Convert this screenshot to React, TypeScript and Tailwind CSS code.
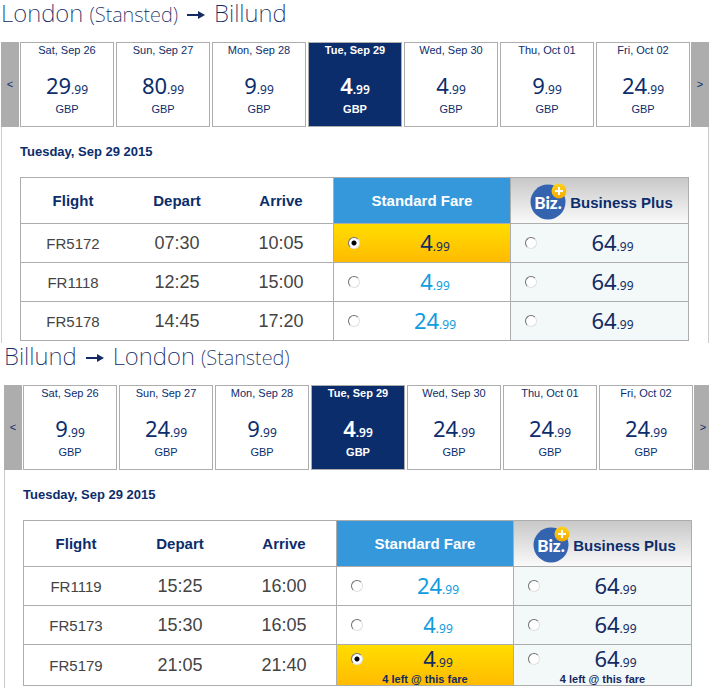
import { ReactNode } from "react";
import clsx from "clsx";

type Day = { label: string; price: string; selected?: boolean };

type Flight = {
  number: string;
  depart: string;
  arrive: string;
  standard: string;
  business: string;
  selected?: boolean;
  note?: string;
};

type Leg = {
  id: string;
  title: ReactNode;
  days: Day[];
  flights: Flight[];
};

function Arrow() {
  return (
    <svg
      width="20"
      height="12"
      viewBox="0 0 20 12"
      className="inline-block mx-2 align-baseline"
      aria-label="to"
    >
      <path d="M1 4h11V1l7 4-7 4V6H1z" fill="#142a62" />
    </svg>
  );
}

const LEGS: Leg[] = [
  {
    id: "outbound",
    title: (
      <>
        London <span className="text-[20px]">(Stansted)</span>
        <Arrow />
        Billund
      </>
    ),
    days: [
      { label: "Sat, Sep 26", price: "29.99" },
      { label: "Sun, Sep 27", price: "80.99" },
      { label: "Mon, Sep 28", price: "9.99" },
      { label: "Tue, Sep 29", price: "4.99", selected: true },
      { label: "Wed, Sep 30", price: "4.99" },
      { label: "Thu, Oct 01", price: "9.99" },
      { label: "Fri, Oct 02", price: "24.99" },
    ],
    flights: [
      { number: "FR5172", depart: "07:30", arrive: "10:05", standard: "4.99", business: "64.99", selected: true },
      { number: "FR1118", depart: "12:25", arrive: "15:00", standard: "4.99", business: "64.99" },
      { number: "FR5178", depart: "14:45", arrive: "17:20", standard: "24.99", business: "64.99" },
    ],
  },
  {
    id: "inbound",
    title: (
      <>
        Billund
        <Arrow />
        London <span className="text-[20px]">(Stansted)</span>
      </>
    ),
    days: [
      { label: "Sat, Sep 26", price: "9.99" },
      { label: "Sun, Sep 27", price: "24.99" },
      { label: "Mon, Sep 28", price: "9.99" },
      { label: "Tue, Sep 29", price: "4.99", selected: true },
      { label: "Wed, Sep 30", price: "24.99" },
      { label: "Thu, Oct 01", price: "24.99" },
      { label: "Fri, Oct 02", price: "24.99" },
    ],
    flights: [
      { number: "FR1119", depart: "15:25", arrive: "16:00", standard: "24.99", business: "64.99" },
      { number: "FR5173", depart: "15:30", arrive: "16:05", standard: "4.99", business: "64.99" },
      {
        number: "FR5179",
        depart: "21:05",
        arrive: "21:40",
        standard: "4.99",
        business: "64.99",
        selected: true,
        note: "4 left @ this fare",
      },
    ],
  },
];

function Price({ value, className }: { value: string; className: string }) {
  const [whole, cents] = value.split(".");
  return (
    <span className={clsx("block font-['Noto_Sans',sans-serif] text-[22px]", className)}>
      {whole}
      <span className="text-[12px] leading-none">.{cents}</span>
    </span>
  );
}

function BizLogo() {
  return (
    <svg width="38" height="38" viewBox="0 0 38 38" aria-hidden="true">
      <defs>
        <linearGradient id="plus" x1="0" y1="0" x2="0" y2="1">
          <stop offset="0" stopColor="#ffd21a" />
          <stop offset="1" stopColor="#f3a900" />
        </linearGradient>
      </defs>
      <circle cx="18" cy="19" r="17.500" fill="#3463b0" />
      <text
        x="18"
        y="26"
        textAnchor="middle"
        fill="#fff"
        className="font-['Lato',sans-serif] text-[17px] font-black"
      >
        Biz.
      </text>
      <circle cx="29" cy="8" r="7.500" fill="url(#plus)" />
      <path d="M29 4v8M25 8h8" stroke="#fff" strokeWidth="2" />
    </svg>
  );
}

function DayStrip({ days }: { days: Day[] }) {
  const stepClass = "w-[18px] shrink-0 bg-[#adadad] text-[11px] text-[#0c2d6c]";
  return (
    <div className="flex h-[85px] gap-px">
      <button className={stepClass} aria-label="Earlier days">
        &lt;
      </button>
      <div className="flex-1 grid grid-cols-7 gap-0.5">
        {days.map((day) => (
          <button
            key={day.label}
            className={clsx(
              "flex flex-col items-center border border-[#adadad] text-[11px] leading-[14px]",
              day.selected ? "bg-[#0c2d6c] text-white font-bold" : "bg-white text-[#0c2d6c]",
            )}
          >
            <span>{day.label}</span>
            <Price
              value={day.price}
              className={clsx("mt-[11px] leading-[34px]", day.selected ? "font-semibold" : "font-normal")}
            />
            <span>GBP</span>
          </button>
        ))}
      </div>
      <button className={stepClass} aria-label="Later days">
        &gt;
      </button>
    </div>
  );
}

function FareCell({
  name,
  value,
  note,
  checked,
  className,
}: {
  name: string;
  value: string;
  note?: string;
  checked?: boolean;
  className: string;
}) {
  return (
    <td className={clsx("border-r border-b border-[#adadad] p-0", className)}>
      <label className="block">
        <span className="flex h-7 items-center pl-3.5">
          <input
            type="radio"
            name={name}
            defaultChecked={checked}
            className="size-3 shrink-0 appearance-none rounded-full border border-[#e0e0e0] border-t-[#707070] border-l-[#707070] bg-white checked:bg-[radial-gradient(circle,#000_2px,#fff_3px)]"
          />
          <Price value={value} className="flex-1 pb-0.5 text-center leading-[26px]" />
        </span>
        {note && (
          <span className="block h-3 text-center text-[11px] leading-3 font-bold text-[#142a62]">{note}</span>
        )}
      </label>
    </td>
  );
}

function FlightTable({ id, flights }: { id: string; flights: Flight[] }) {
  const line = "border-b border-[#adadad]";
  const head = "px-0 pt-0.5 pb-0 border-b border-[#adadad]";
  return (
    <table className="w-full table-fixed border-separate border-spacing-0 border-t border-l border-[#adadad] text-center">
      <colgroup>
        <col className="w-[104px]" />
        <col className="w-[104px]" />
        <col className="w-[105px]" />
        <col className="w-[177px]" />
        <col className="w-[178px]" />
      </colgroup>
      <thead>
        <tr className="h-[46px] text-[15px] text-[#0c2d6c]">
          <th className={head}>Flight</th>
          <th className={head}>Depart</th>
          <th className={clsx("border-r", head)}>Arrive</th>
          <th className={clsx("border-r bg-[#3598db] text-white", head)}>Standard Fare</th>
          <th className={clsx("border-r bg-linear-to-b from-[#c8c8c8] to-[#fafafa]", head)}>
            <span className="flex items-center justify-center gap-0.5 pl-1">
              <BizLogo />
              <span className="pt-1">Business Plus</span>
            </span>
          </th>
        </tr>
      </thead>
      <tbody>
        {flights.map((flight) => (
          <tr
            key={flight.number}
            className={clsx("text-lg leading-6 text-[#444]", flight.note ? "h-[41px]" : "h-[39px]")}
          >
            <td className={clsx("p-0", line)}>
              <span className="text-[15px] leading-none">{flight.number}</span>
            </td>
            <td className={clsx("p-0", line)}>{flight.depart}</td>
            <td className={clsx("p-0 border-r", line)}>{flight.arrive}</td>
            <FareCell
              name={id}
              value={flight.standard}
              note={flight.note}
              checked={flight.selected}
              className={
                flight.selected
                  ? "bg-linear-to-b from-[#ffdd00] to-[#ffbb00] text-[#142a62]"
                  : "text-[#0f9ce0]"
              }
            />
            <FareCell
              name={id}
              value={flight.business}
              note={flight.note}
              className="bg-[#f3f8f9] text-[#142a62]"
            />
          </tr>
        ))}
      </tbody>
    </table>
  );
}

function LegSection({ leg, className }: { leg: Leg; className: string }) {
  return (
    <section className={className}>
      <h2 className="h-[42px] font-['Noto_Sans',sans-serif] text-[24px] leading-[26px] font-extralight whitespace-nowrap text-[#142a62]">
        {leg.title}
      </h2>
      <DayStrip days={leg.days} />
      <div className="border-x border-[#ccc] pr-[19px] pb-0.5 pl-[18px]">
        <h3 className="text-[13px] leading-[50px] font-bold text-[#0c2d6c]">Tuesday, Sep 29 2015</h3>
        <FlightTable id={leg.id} flights={leg.flights} />
      </div>
    </section>
  );
}

export default function App() {
  return (
    <main className="overflow-x-clip bg-white font-['Liberation_Sans',Arial,sans-serif]">
      <LegSection leg={LEGS[0]} className="ml-px" />
      <LegSection leg={LEGS[1]} className="ml-1 -mr-[3px]" />
    </main>
  );
}
